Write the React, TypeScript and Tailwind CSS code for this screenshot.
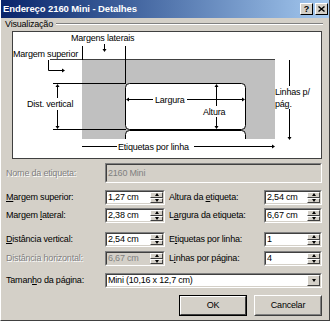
import React from "react";

// pontas de seta do diagrama
const up = (x: number, y: number) => <polygon points={`${x - 2},${y + 3} ${x + 2},${y + 3} ${x},${y}`} />;
const down = (x: number, y: number) => <polygon points={`${x - 2},${y - 3} ${x + 2},${y - 3} ${x},${y}`} />;
const left = (x: number, y: number) => <polygon points={`${x + 3},${y - 2} ${x + 3},${y + 2} ${x},${y}`} />;
const right = (x: number, y: number) => <polygon points={`${x - 3},${y - 2} ${x - 3},${y + 2} ${x},${y}`} />;

function Preview() {
  return (
    <svg width={308} height={126} viewBox="13 32 308 126" className="block">
      <defs>
        <clipPath id="pg">
          <rect x="82" y="60" width="193" height="79" />
        </clipPath>
      </defs>
      <rect x="82" y="60" width="193" height="79" fill="#c0c0c0" />
      <g clipPath="url(#pg)">
        <rect x="125.5" y="130.5" width="120" height="30" rx="4" fill="#fff" stroke="#000" />
      </g>
      <rect x="125.5" y="83.5" width="120" height="46" rx="4" fill="#fff" stroke="#000" />

      <g stroke="#000" strokeWidth="1" fill="none">
        <line x1="50" y1="59.5" x2="275" y2="59.5" stroke="#404040" />
        <line x1="82.5" y1="46" x2="82.5" y2="60" />
        <line x1="125.5" y1="46" x2="125.5" y2="84" />
        <line x1="104.5" y1="44" x2="104.5" y2="50" />
        <polyline points="48.5,60 48.5,70.5 62,70.5" />
        <line x1="53" y1="83.5" x2="126" y2="83.5" />
        <line x1="53" y1="129.5" x2="126" y2="129.5" />
        <line x1="57.5" y1="86" x2="57.5" y2="127" />
        <line x1="128" y1="99.5" x2="243" y2="99.5" />
        <line x1="216.5" y1="86" x2="216.5" y2="127" />
        <line x1="289.5" y1="60" x2="289.5" y2="86" />
        <line x1="289.5" y1="109" x2="289.5" y2="138" />
        <line x1="82" y1="146.5" x2="117" y2="146.5" />
        <line x1="194" y1="146.5" x2="273" y2="146.5" />
      </g>

      <g fill="#000">
        {down(104.5, 52)}
        {right(65, 70.5)}
        {up(57.5, 84)}
        {down(57.5, 129)}
        {left(126, 99.5)}
        {right(245, 99.5)}
        {up(216.5, 84)}
        {down(216.5, 129)}
        {down(289.5, 140)}
        {right(275, 146.5)}
      </g>

      <g fill="#fff">
        <rect x="26" y="98" width="53" height="12" />
        <rect x="153" y="94" width="34" height="11" />
        <rect x="201" y="106" width="28" height="11" />
      </g>

      <g fontFamily="'Liberation Sans', Arial, sans-serif" fontSize="9" letterSpacing="-0.2" fill="#000">
        <text x="71" y="41">Margens laterais</text>
        <text x="13" y="57">Margem superior</text>
        <text x="27" y="107">Dist. vertical</text>
        <text x="155" y="103">Largura</text>
        <text x="203" y="115">Altura</text>
        <text x="275" y="95">Linhas p/</text>
        <text x="275" y="107">pág.</text>
        <text x="118" y="149.5">Etiquetas por linha</text>
      </g>
    </svg>
  );
}

function Sunken({ className, bg, children }: { className: string; bg: string; children: React.ReactNode }) {
  return (
    <div className={`border border-t-[#808080] border-l-[#808080] border-b-white border-r-white ${className}`}>
      <div className={`h-full flex items-center border border-t-[#404040] border-l-[#404040] border-b-[#d4d0c8] border-r-[#d4d0c8] ${bg}`}>
        {children}
      </div>
    </div>
  );
}

function Tri({ dir }: { dir: "up" | "down" }) {
  return dir === "up" ? (
    <div className="w-0 h-0 border-x-[2.5px] border-x-transparent border-b-[3px] border-b-black" />
  ) : (
    <div className="w-0 h-0 border-x-[2.5px] border-x-transparent border-t-[3px] border-t-black" />
  );
}

function SmallBtn({ dir }: { dir: "up" | "down" }) {
  return (
    <div className="flex-1 flex items-center justify-center bg-[#d4d0c8] border border-t-white border-l-white border-b-[#404040] border-r-[#404040]">
      <Tri dir={dir} />
    </div>
  );
}

function Spin({ value, w, disabled }: { value: string; w: string; disabled?: boolean }) {
  return (
    <Sunken className={`${w} h-[15px]`} bg={disabled ? "bg-[#d4d0c8]" : "bg-white"}>
      <span className={`flex-1 pl-[1px] ${disabled ? "text-[#808080]" : ""}`}>{value}</span>
      <div className="w-[13px] h-full flex flex-col">
        <SmallBtn dir="up" />
        <SmallBtn dir="down" />
      </div>
    </Sunken>
  );
}

const dim = "text-[#808080] [text-shadow:1px_1px_0_#fff]";

export default function App() {
  return (
    <div className="w-[330px] h-[321px] overflow-hidden flex flex-col bg-[#d4d0c8] border-l border-r border-b border-l-white border-r-[#404040] border-b-[#404040] font-['Liberation_Sans',Arial,sans-serif] text-[9px] leading-none tracking-[-0.2px] text-black">
      <div className="h-[18px] shrink-0 flex items-center justify-between pl-[2px] pr-[1px] bg-linear-to-r from-[#0a246a] to-[#a6caf0]">
        <span className="text-white font-bold text-[9.5px] tracking-[-0.1px]">Endereço 2160 Mini - Detalhes</span>
        <div className="flex gap-[2px]">
          <div className="w-[13px] h-[12px] flex items-center justify-center bg-[#d4d0c8] border border-t-white border-l-white border-b-black border-r-black font-bold text-[9px]">?</div>
          <div className="w-[13px] h-[12px] flex items-center justify-center bg-[#d4d0c8] border border-t-white border-l-white border-b-black border-r-black">
            <svg width="7" height="6" viewBox="0 0 7 6">
              <path d="M0.5 0.5 L6.5 5.5 M6.5 0.5 L0.5 5.5" stroke="#000" strokeWidth="1.4" />
            </svg>
          </div>
        </div>
      </div>

      <div className="flex flex-col pl-[4px]">
        <div className="mt-[1px] h-[10px] flex items-center pr-[6px]">
          <span>Visualização</span>
          <div className="flex-1 ml-[3px] border-t border-b border-t-[#808080] border-b-white" />
        </div>

        <div className="mt-[2px] ml-[7px] w-[310px] h-[128px] border border-[#404040] bg-white">
          <Preview />
        </div>

        <div className="mt-[4px] h-[20px] flex items-center">
          <span className={`w-[100px] pl-[1px] ${dim}`}>Nome da etiqueta:</span>
          <Sunken className="w-[217px] h-[20px]" bg="bg-[#d4d0c8]">
            <span className="pl-[1px] text-[#808080]">2160 Mini</span>
          </Sunken>
        </div>

        <div className="mt-[7px] h-[15px] flex items-center">
          <span className="w-[100px] pl-[1px]"><u>M</u>argem superior:</span>
          <Spin value="1,27 cm" w="w-[60px]" />
          <span className="w-[99px] pl-[4px]">Altura da <u>e</u>tiqueta:</span>
          <Spin value="2,54 cm" w="w-[58px]" />
        </div>

        <div className="mt-[3px] h-[15px] flex items-center">
          <span className="w-[100px] pl-[1px]">Margem <u>l</u>ateral:</span>
          <Spin value="2,38 cm" w="w-[60px]" />
          <span className="w-[99px] pl-[4px]">L<u>a</u>rgura da etiqueta:</span>
          <Spin value="6,67 cm" w="w-[58px]" />
        </div>

        <div className="mt-[9px] h-[15px] flex items-center">
          <span className="w-[100px] pl-[1px]"><u>D</u>istância vertical:</span>
          <Spin value="2,54 cm" w="w-[60px]" />
          <span className="w-[99px] pl-[4px]">E<u>t</u>iquetas por linha:</span>
          <Spin value="1" w="w-[58px]" />
        </div>

        <div className="mt-[4px] h-[15px] flex items-center">
          <span className={`w-[100px] pl-[1px] ${dim}`}>Distância horizontal:</span>
          <Spin value="6,67 cm" w="w-[60px]" disabled />
          <span className="w-[99px] pl-[4px]">L<u>i</u>nhas por página:</span>
          <Spin value="4" w="w-[58px]" />
        </div>

        <div className="mt-[7px] h-[15px] flex items-center">
          <span className="w-[100px] pl-[1px]">Taman<u>h</u>o da página:</span>
          <Sunken className="w-[217px] h-[15px]" bg="bg-white">
            <span className="flex-1 pl-[1px]">Mini (10,16 x 12,7 cm)</span>
            <div className="w-[13px] h-full flex items-center justify-center bg-[#d4d0c8] border border-t-white border-l-white border-b-[#404040] border-r-[#404040]">
              <Tri dir="down" />
            </div>
          </Sunken>
        </div>

        <div className="mt-[7px] h-[21px] flex justify-end gap-[7px] pr-[7px]">
          <div className="w-[68px] h-full border border-black">
            <div className="h-full flex items-center justify-center border border-t-white border-l-white border-b-[#404040] border-r-[#404040]">
              OK
            </div>
          </div>
          <div className="w-[68px] h-full border border-t-white border-l-white border-b-[#404040] border-r-[#404040]">
            <div className="h-full flex items-center justify-center border border-t-[#d4d0c8] border-l-[#d4d0c8] border-b-[#808080] border-r-[#808080]">
              Cancelar
            </div>
          </div>
        </div>
      </div>
    </div>
  );
}
